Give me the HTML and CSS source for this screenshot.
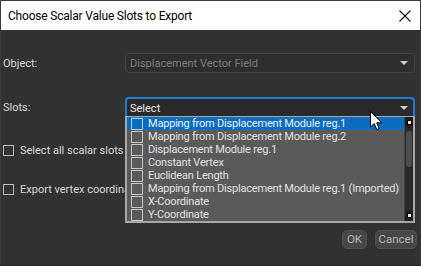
FILE: index.html
```html
<!DOCTYPE html>
<html>
<head>
<meta charset="utf-8">
<link rel="stylesheet" href="styles.css">
</head>
<body>
<div class="window">
  <div class="titlebar">
    <span class="title">Choose Scalar Value Slots to Export</span>
    <svg class="close" width="12" height="12" viewBox="0 0 12 12"><path d="M0.5 0.5L11.5 11.5M11.5 0.5L0.5 11.5" stroke="#111" stroke-width="1.1" fill="none"/></svg>
  </div>
  <div class="content">
    <div class="row r1">
      <span class="label">Object:</span>
      <div class="combo disabled"><span>Displacement Vector Field</span><i class="arrow"></i></div>
    </div>
    <div class="row r2">
      <span class="label">Slots:</span>
      <div class="combo active"><span>Select</span><i class="arrow"></i></div>
    </div>
    <div class="check c1"><i class="box"></i><span>Select all scalar slots</span></div>
    <div class="check c2"><i class="box"></i><span>Export vertex coordinates</span></div>
    <div class="buttons">
      <button class="btn ok">OK</button>
      <button class="btn cancel">Cancel</button>
    </div>
  </div>
  <div class="popup">
    <ul class="items">
      <li class="sel"><i class="box"></i>Mapping from Displacement Module reg.1</li>
      <li><i class="box"></i>Mapping from Displacement Module reg.2</li>
      <li><i class="box"></i>Displacement Module reg.1</li>
      <li><i class="box"></i>Constant Vertex</li>
      <li><i class="box"></i>Euclidean Length</li>
      <li><i class="box"></i>Mapping from Displacement Module reg.1 (Imported)</li>
      <li><i class="box"></i>X-Coordinate</li>
      <li><i class="box"></i>Y-Coordinate</li>
    </ul>
    <div class="scrollbar">
      <div class="sbtn"><i></i></div>
      <div class="thumb"></div>
      <div class="track"></div>
      <div class="sbtn"><i></i></div>
    </div>
  </div>
  <svg class="cursor" width="13" height="20" viewBox="0 0 13 20"><path d="M0.5 0.5L0.5 16L4.2 12.6L6.8 18.6L9.2 17.6L6.7 11.8L11.8 11.8Z" fill="#fff" stroke="#000" stroke-width="1"/></svg>
</div>
</body>
</html>
```

FILE: styles.css
```css
* { box-sizing: border-box; }
html, body { margin: 0; padding: 0; background: #2b2b2b; }
body { font-family: Roboto, "Noto Sans", sans-serif; font-size: 11px; }
.window {
  position: relative;
  width: 421px; height: 266px;
  border: 1px solid #3c3c3c;
  border-bottom-color: #222;
  background: #323232;
  overflow: hidden;
  display: flex; flex-direction: column;
}
.titlebar {
  height: 29px; background: #fff;
  display: flex; align-items: center; justify-content: space-between;
  padding: 0 9px 0 7px;
}
.title { font-size: 12px; color: #000; letter-spacing: -0.2px; }
.close { display: block; }
.content { padding: 0 3px 0 2px; display: flex; flex-direction: column; color: #d8d8d8; }
.row { display: flex; align-items: center; height: 20px; }
.r1 { margin-top: 23px; }
.r2 { margin-top: 24px; }
.label { width: 122px; }
.combo {
  width: 290px; height: 20px; border-radius: 4px;
  display: flex; align-items: center; justify-content: space-between;
  padding: 0 6px 0 4px;
}
.combo.disabled { border: 1px solid #454545; background: #2e2e2e; color: #7d7d7d; }
.combo.active { border: 2px solid #1d7bd0; border-bottom: none; border-radius: 4px 4px 0 0; background: #2a2a2a; color: #e8e8e8; padding-left: 3px; padding-right: 5px; }
.arrow { width: 0; height: 0; border-left: 4px solid transparent; border-right: 4px solid transparent; border-top: 4px solid #d0d0d0; }
.combo.disabled .arrow { border-top-color: #cfcfcf; }
.check { display: flex; align-items: center; height: 16px; gap: 6px; white-space: nowrap; }
.c1 { margin-top: 25px; }
.c2 { margin-top: 23px; }
.box { display: inline-block; width: 11px; height: 11px; border: 1px solid #bdbdbd; flex: none; }
.buttons { margin-top: 33px; display: flex; justify-content: flex-end; gap: 8px; }
.btn {
  height: 19px; border-radius: 5px; border: 1px solid #505050;
  background: #474747; color: #b5b5b5;
  font: inherit; font-size: 11.5px; padding: 0; line-height: 17px;
}
.ok { width: 25px; }
.cancel { width: 42px; }
.popup {
  position: absolute; left: 124px; top: 115px; width: 290px; height: 107px;
  border: 2px solid #a8a8a8; border-top: 1px solid #a8a8a8;
  background: #5a5a5a;
  display: flex;
}
.items { list-style: none; margin: 0; padding: 0; flex: 1; overflow: hidden; }
.items li {
  height: 13px; display: flex; align-items: center; gap: 5px;
  padding-left: 4px; color: #e2e2e2; white-space: nowrap; line-height: 13px;
  letter-spacing: -0.2px;
}
.items li.sel { background: #0a6cbf; color: #e8f0f8; }
.items .box { width: 12px; height: 12px; border-color: #c8c8c8; }
.items li.sel .box { border-color: #b8d0ea; }
.scrollbar { width: 9px; background: #2a2a2a; display: flex; flex-direction: column; border-left: 1px solid #444; }
.sbtn { height: 11px; display: flex; align-items: center; justify-content: center; background: #1e1e1e; border-radius: 3px; }
.sbtn i { width: 3px; height: 3px; background: #fff; outline: 1px solid #000; }
.thumb { height: 36px; margin: 3px 1px 0; background: #4d4d4d; border-radius: 3px; }
.track { flex: 1; }
.cursor { position: absolute; left: 369px; top: 110px; }
```
